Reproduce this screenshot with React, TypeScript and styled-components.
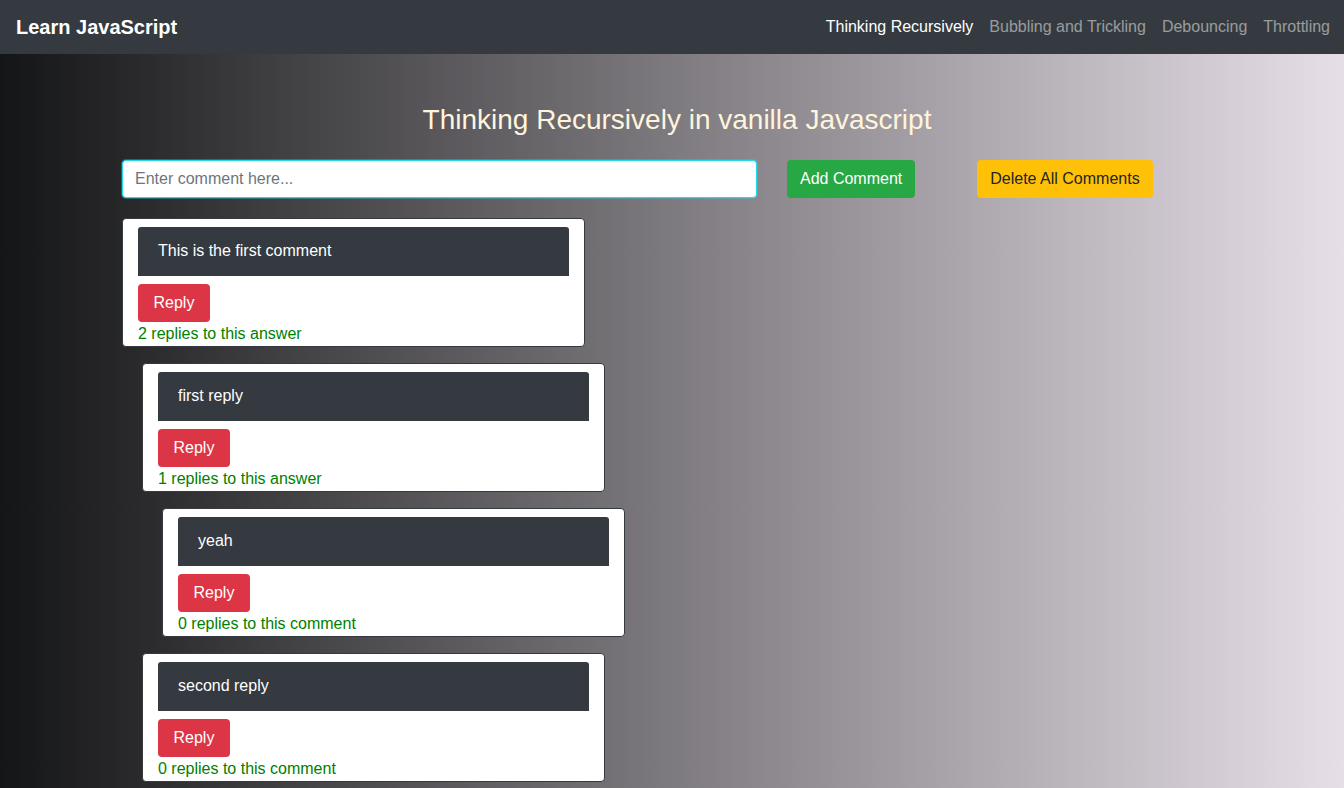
import React from "react";
import styled, { createGlobalStyle } from "styled-components";

const Global = createGlobalStyle`
  html, body { margin: 0; padding: 0; }
  body {
    font-family: "Liberation Sans", Arial, sans-serif;
    font-size: 16px;
    line-height: 1.5;
    color: #212529;
    min-height: 788px;
    background: linear-gradient(to right, #141516 0%, #e7dfe8 100%);
  }
  * { box-sizing: border-box; }
`;

const Navbar = styled.nav`
  height: 54px;
  background: #343a40;
  display: flex;
  align-items: center;
  justify-content: space-between;
  padding: 0 14px 0 16px;
`;

const Brand = styled.a`
  color: #fff;
  font-size: 20px;
  font-weight: 700;
  text-decoration: none;
`;

const NavLinks = styled.div`
  display: flex;
  gap: 16px;
`;

const NavLink = styled.a<{ $active?: boolean }>`
  color: ${(p) => (p.$active ? "#fff" : "rgba(255,255,255,0.5)")};
  font-size: 16px;
  text-decoration: none;
`;

const Main = styled.main`
  width: 1100px;
  margin: 0 auto;
  padding-bottom: 6px;
`;

const Title = styled.h1`
  margin: 48px 0 22px;
  padding-left: 10px;
  text-align: center;
  font-size: 28px;
  font-weight: 400;
  line-height: 36px;
  color: #fff4dc;
`;

const Controls = styled.div`
  display: flex;
  align-items: center;
  height: 38px;
`;

const Input = styled.input`
  width: 635px;
  height: 38px;
  padding: 6px 12px;
  font-family: inherit;
  font-size: 16px;
  border: 1px solid #1fdbe9;
  border-radius: 4px;
  box-shadow: 0 0 0 1px rgba(31, 219, 233, 0.35);
  outline: none;
  &::placeholder { color: #6c757d; }
`;

const Btn = styled.button<{ $variant: "success" | "warning" | "danger"; $ml?: number }>`
  height: 38px;
  padding: 6px 12px;
  margin-left: ${(p) => p.$ml ?? 0}px;
  font-family: inherit;
  font-size: 16px;
  line-height: 24px;
  border: 1px solid transparent;
  border-radius: 4px;
  cursor: pointer;
  background: ${(p) =>
    p.$variant === "success" ? "#28a745" : p.$variant === "warning" ? "#ffc107" : "#dc3545"};
  color: ${(p) => (p.$variant === "warning" ? "#212529" : "#fff")};
`;

const Card = styled.div<{ $depth: number }>`
  width: 463px;
  margin: 20px 0 0 ${(p) => p.$depth * 20}px;
  & + & { margin-top: 16px; }
  padding: 8px 15px 0;
  background: #fff;
  border: 1px solid #343a40;
  border-radius: 4px;
`;

const List = styled.div`
  display: flex;
  flex-direction: column;
`;

const Body = styled.div`
  background: #343a40;
  color: #fff;
  height: 49px;
  padding: 12px 20px;
  border-radius: 3px 3px 0 0;
  line-height: 24px;
`;

const ReplyBtn = styled(Btn)`
  margin-top: 8px;
  display: block;
  padding: 6px 14.5px;
`;

const Count = styled.div`
  color: #008000;
  line-height: 24px;
`;

type C = { text: string; count: string; depth: number };
const comments: C[] = [
  { text: "This is the first comment", count: "2 replies to this answer", depth: 0 },
  { text: "first reply", count: "1 replies to this answer", depth: 1 },
  { text: "yeah", count: "0 replies to this comment", depth: 2 },
  { text: "second reply", count: "0 replies to this comment", depth: 1 },
];

export default function App() {
  return (
    <>
      <Global />
      <Navbar>
        <Brand href="#">Learn JavaScript</Brand>
        <NavLinks>
          <NavLink $active href="#">Thinking Recursively</NavLink>
          <NavLink href="#">Bubbling and Trickling</NavLink>
          <NavLink href="#">Debouncing</NavLink>
          <NavLink href="#">Throttling</NavLink>
        </NavLinks>
      </Navbar>
      <Main>
        <Title>Thinking Recursively in vanilla Javascript</Title>
        <Controls>
          <Input placeholder="Enter comment here..." />
          <Btn $variant="success" $ml={30}>Add Comment</Btn>
          <Btn $variant="warning" $ml={62}>Delete All Comments</Btn>
        </Controls>
        <List>
          {comments.map((c, i) => (
            <Card key={i} $depth={c.depth}>
              <Body>{c.text}</Body>
              <ReplyBtn $variant="danger">Reply</ReplyBtn>
              <Count>{c.count}</Count>
            </Card>
          ))}
        </List>
      </Main>
    </>
  );
}
